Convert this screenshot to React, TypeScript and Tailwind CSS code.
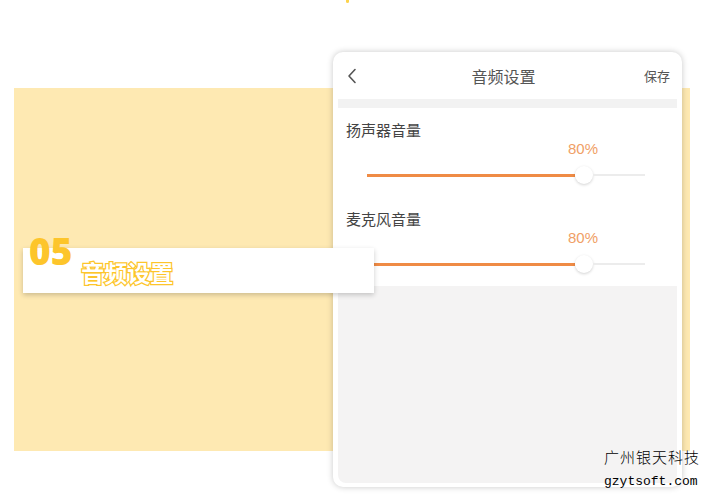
import React from 'react';

const cjk = "font-['Noto_Sans_CJK_SC','Noto_Sans',sans-serif]";

const VolumeSlider: React.FC<{ label: string; value: string }> = ({ label, value }) => (
  <div className="flex flex-col">
    <div className={`pl-[8px] h-[20px] leading-[20px] text-[15px] text-[#444] ${cjk}`}>{label}</div>
    <div className="ml-[29px] w-[278px]">
      <div className="pl-[201px] h-[18px] leading-[18px] text-[15px] text-[#f0a066] font-['Liberation_Sans',Arial,sans-serif]">
        {value}
      </div>
      <div className="mt-[7px] h-[20px] flex items-center">
        <div className="w-[208px] h-[3px] bg-[#ef8b45]" />
        <div className="w-[18px] h-[18px] rounded-full bg-white shadow-[0_1px_3px_rgba(0,0,0,0.18)]" />
        <div className="flex-1 h-[2px] bg-[#ececec]" />
      </div>
    </div>
  </div>
);

const App: React.FC = () => {
  return (
    <div className="relative w-[715px] h-[496px] bg-white overflow-hidden">
      {/* little yellow tick at the very top */}
      <div className="absolute left-[346px] top-0 w-[3px] h-[3px] bg-[#fcd34d] rounded-b-full" />

      {/* Yellow backdrop */}
      <div className="ml-[14px] mt-[88px] w-[676px] h-[363px] bg-[#fee9b2]" />

      {/* Phone screen */}
      <div className="absolute left-[333px] top-[52px] w-[349px] h-[435px] rounded-[10px] bg-white shadow-[0_0_6px_rgba(0,0,0,0.22)] px-[5px] pb-[4px] flex flex-col">
        <div className="h-[47px] flex items-center">
          <svg width="10" height="16" viewBox="0 0 10 16" className="ml-[9px]">
            <path d="M8 1.5 L2 8 L8 14.5" fill="none" stroke="#555" strokeWidth="1.6" strokeLinecap="round" strokeLinejoin="round" />
          </svg>
          <div className={`flex-1 text-center pl-[6px] text-[16px] text-[#555] ${cjk}`}>音频设置</div>
          <div className={`pr-[7px] text-[13px] text-[#555] ${cjk}`}>保存</div>
        </div>
        <div className="h-[9px] bg-[#f2f2f2]" />
        <div className="h-[178px] pt-[12px] flex flex-col gap-[26px]">
          <VolumeSlider label="扬声器音量" value="80%" />
          <div className="-mt-[2px]">
            <VolumeSlider label="麦克风音量" value="80%" />
          </div>
        </div>
        <div className="flex-1 bg-[#f4f3f3] rounded-b-[8px]" />
      </div>

      {/* Section label */}
      <div className="absolute left-[23px] top-[248px] w-[351px] h-[45px] bg-white shadow-[0_2px_5px_rgba(0,0,0,0.2)] flex items-start">
        <span className="ml-[6px] -mt-[16px] text-[37px] leading-none font-extrabold text-[#fdc52b] font-['Open_Sans',Arial,sans-serif]">
          05
        </span>
        <span
          className={`ml-[9px] mt-[12px] text-[23px] leading-[24px] font-bold text-white [-webkit-text-stroke:2.5px_#fdc52b] [paint-order:stroke_fill] ${cjk}`}
        >
          音频设置
        </span>
      </div>

      {/* Watermark */}
      <div className="absolute left-[604px] top-[448px] flex flex-col text-black">
        <div className={`text-[15px] leading-[18px] tracking-[1px] font-light ${cjk}`}>广州银天科技</div>
        <div className="mt-[9px] text-[13px] leading-[14px] font-['Liberation_Mono','DejaVu_Sans_Mono',monospace]">
          gzytsoft.com
        </div>
      </div>
    </div>
  );
};

export default App;
